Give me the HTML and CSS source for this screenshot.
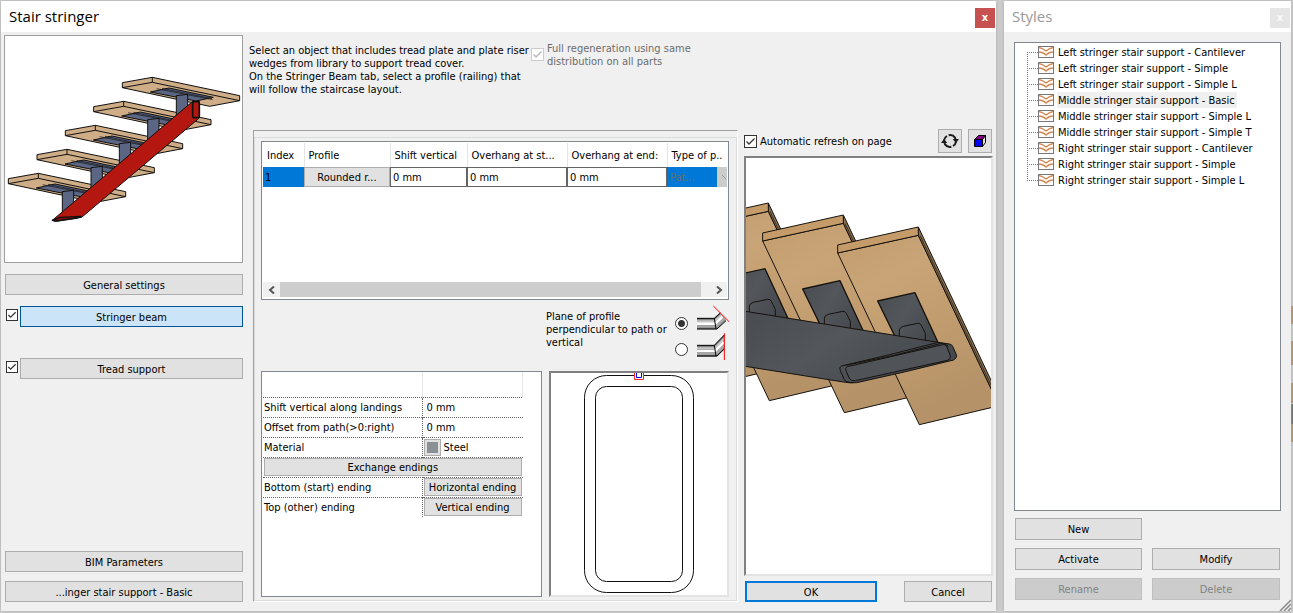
FILE: index.html
```html
<!DOCTYPE html>
<html lang="en">
<head>
<meta charset="utf-8">
<title>Stair stringer</title>
<link rel="stylesheet" href="styles.css">
</head>
<body>
<svg class="defs" aria-hidden="true">
  <defs>
    <g id="step">
      <path d="M367 248L457 232L719 287V302L629 319L367 263Z" fill="#cead87"/>
      <path d="M367 263L457 247L719 302M457 232V247" fill="none"/>
      <path d="M451 276L507 264L640 292L588 303Z" fill="#5b6685"/>
      <path d="M470 266L638 299M486 265L636 296" fill="none" stroke-width="2"/>
      <path d="M529 287L563 283V352H529Z" fill="#5b6685"/>
    </g>
    <linearGradient id="wood" x1="0" y1="0" x2="0.4" y2="1">
      <stop offset="0" stop-color="#c39c6c"/><stop offset="0.3" stop-color="#c8a477"/>
      <stop offset="0.6" stop-color="#c09c6e"/><stop offset="1" stop-color="#b69268"/>
    </linearGradient>
    <linearGradient id="slate" x1="0" y1="0" x2="1" y2="0.5">
      <stop offset="0" stop-color="#484c50"/><stop offset="0.5" stop-color="#53565a"/><stop offset="1" stop-color="#45494d"/>
    </linearGradient>
    <g id="tread">
      <path d="M293 399L535 346L766 833V860L538 914Z" fill="url(#wood)"/>
      <path d="M535 321V346L766 833V808Z" fill="#8d7150"/>
      <path d="M540 346L766 822" fill="none" stroke-width="2"/>
      <path d="M293 375L535 321V346L293 399Z" fill="#c59c69"/>
      <path d="M413 543L525 518L600 680H480Z" fill="url(#slate)" stroke-width="4"/>
      <path d="M478 655V630Q479 622 490 619L533 610Q541 609 544 616L556 640V662" fill="none" stroke-width="3"/>
    </g>
    <g id="style-icon">
      <rect x="0.5" y="0.5" width="15" height="11" fill="#fff" stroke="#777"/>
      <path d="M1 1.5Q4 2 8 5Q12 2 15 1.5M1 6Q5 6 8 9Q11 6 15 6" fill="none" stroke="#d28a52" stroke-width="1.4"/>
    </g>
  </defs>
</svg>

<main class="desk">
  <section class="window" aria-label="Stair stringer">
    <header class="titlebar">
      <h1>Stair stringer</h1>
      <button class="close" aria-label="Close">x</button>
    </header>
    <div class="dialog">
      <nav class="sidebar">
        <svg class="picture" viewBox="15 108 711 678" preserveAspectRatio="xMidYMid slice" role="img" aria-label="Stair with highlighted stringer beam">
          <g stroke="#111" stroke-width="3" stroke-linejoin="round">
            <use href="#step" x="-342" y="288"/>
            <use href="#step" x="-256" y="216"/>
            <use href="#step" x="-171" y="144"/>
            <use href="#step" x="-86" y="72"/>
            <use href="#step"/>
            <path d="M157 661L578 304H598V354L245 652L166 664Z" fill="#b3170f"/>
            <path d="M157 661L180 652L243 649L232 654L170 663Z" fill="#7e120c" stroke-width="4"/>
            <rect x="578" y="305" width="20" height="48" rx="6" fill="#b3170f" stroke-width="5"/>
          </g>
        </svg>
        <button class="btn general">General settings</button>
        <div class="tab stringer">
          <input type="checkbox" class="check small" checked aria-label="Use stringer beam">
          <button class="btn active">Stringer beam</button>
        </div>
        <div class="tab support">
          <input type="checkbox" class="check small" checked aria-label="Use tread support">
          <button class="btn">Tread support</button>
        </div>
        <div class="sidebar-end">
          <button class="btn">BIM Parameters</button>
          <button class="btn">...inger stair support - Basic</button>
        </div>
      </nav>

      <div class="center">
        <div class="notes">
          <p class="note">Select an object that includes tread plate and plate riser<br>wedges from library to support tread cover.<br>On the Stringer Beam tab, select a profile (railing) that<br>will follow the staircase layout.</p>
          <label class="regen"><input type="checkbox" class="check" checked disabled><span>Full regeneration using same<br>distribution on all parts</span></label>
        </div>
        <div class="panel">
          <div class="panel-in">
            <div class="listbox">
              <table class="profiles">
                <colgroup><col class="c-index"><col class="c-profile"><col class="c-shift"><col class="c-over"><col class="c-over"><col></colgroup>
                <thead>
                  <tr><th>Index</th><th>Profile</th><th>Shift vertical</th><th>Overhang at st...</th><th>Overhang at end:</th><th>Type of p..</th></tr>
                </thead>
                <tbody>
                  <tr>
                    <td class="sel">1</td>
                    <td><button class="btn cell">Rounded r...</button></td>
                    <td><input type="text" class="cell" value="0 mm" aria-label="Shift vertical"></td>
                    <td><input type="text" class="cell" value="0 mm" aria-label="Overhang at start"></td>
                    <td><input type="text" class="cell" value="0 mm" aria-label="Overhang at end"></td>
                    <td><select class="type" disabled aria-label="Type of path"><option>Pat...</option></select></td>
                  </tr>
                </tbody>
              </table>
              <div class="scrollbar">
                <button aria-label="Scroll left"><svg width="8" height="8" viewBox="0 0 8 8"><path d="M6 0.5L2 4L6 7.5" /></svg></button>
                <div class="track"><div class="thumb"></div></div>
                <button aria-label="Scroll right"><svg width="8" height="8" viewBox="0 0 8 8"><path d="M2 0.5L6 4L2 7.5"/></svg></button>
              </div>
            </div>

            <div class="plane" role="radiogroup" aria-labelledby="plane-label">
              <p id="plane-label">Plane of profile<br>perpendicular to path or<br>vertical</p>
              <div class="choices">
                <label><input type="radio" name="plane" checked aria-label="Perpendicular to path">
                  <svg width="32" height="26" viewBox="81 30 96 78">
                    <path d="M81 54H132L150 38L168 60L140 88H81Z" fill="#808080"/>
                    <path d="M81 64H134L155 44" stroke="#c8c8c8" stroke-width="6" fill="none"/>
                    <path d="M81 71H136L158 50" stroke="#fff" stroke-width="8" fill="none"/>
                    <path d="M81 79H139L164 56" stroke="#aaa" stroke-width="7" fill="none"/>
                    <path d="M81 55H133L151 39M81 87H141L168 62M133 55L138 87" stroke="#000" stroke-width="3" fill="none"/>
                    <path d="M130 18L177 65" stroke="#f00" stroke-width="3"/>
                  </svg>
                </label>
                <label><input type="radio" name="plane" aria-label="Vertical">
                  <svg width="32" height="26" viewBox="81 108 96 78">
                    <path d="M81 136H132L163 104V146L140 170H81Z" fill="#808080"/>
                    <path d="M81 145H134L162 116" stroke="#c8c8c8" stroke-width="6" fill="none"/>
                    <path d="M81 153H136L162 126" stroke="#fff" stroke-width="8" fill="none"/>
                    <path d="M81 161H139L162 137" stroke="#aaa" stroke-width="7" fill="none"/>
                    <path d="M81 136H133L163 105M81 168H141L163 147M133 136L138 168" stroke="#000" stroke-width="3" fill="none"/>
                    <path d="M163 100V180" stroke="#f00" stroke-width="3"/>
                  </svg>
                </label>
              </div>
            </div>

            <div class="details">
              <div class="listbox">
                <table class="props">
                  <colgroup><col class="c-name"><col class="c-value"></colgroup>
                  <thead><tr><td></td><td></td></tr></thead>
                  <tbody>
                    <tr><th>Shift vertical along landings</th><td><input type="text" class="plain" value="0 mm" aria-label="Shift vertical along landings"></td></tr>
                    <tr><th>Offset from path(&gt;0:right)</th><td><input type="text" class="plain" value="0 mm" aria-label="Offset from path"></td></tr>
                    <tr><th>Material</th><td><div class="material"><button class="swatch" aria-label="Choose material"></button>Steel</div></td></tr>
                    <tr><td colspan="2" class="wide"><button class="btn prop">Exchange endings</button></td></tr>
                    <tr><th>Bottom (start) ending</th><td><button class="btn prop">Horizontal ending</button></td></tr>
                    <tr><th>Top (other) ending</th><td><button class="btn prop">Vertical ending</button></td></tr>
                  </tbody>
                </table>
              </div>
              <div class="sunken">
                <svg class="profile-view" viewBox="0 0 176 222" preserveAspectRatio="xMidYMin meet" role="img" aria-label="Rounded rectangle profile">
                  <rect x="33.500" y="2.500" width="109" height="217" rx="22" fill="none" stroke="#111"/>
                  <rect x="44.500" y="13.500" width="87" height="195" rx="11" fill="none" stroke="#111"/>
                  <path d="M83.500 0V6.500H92.500V0" fill="#fff" stroke="#f22"/>
                  <path d="M85.500 0V4.500H90.500V0" fill="none" stroke="#00f"/>
                </svg>
              </div>
            </div>
          </div>
        </div>
      </div>

      <div class="right">
        <div class="refresh">
          <label><input type="checkbox" class="check" checked>Automatic refresh on page</label>
          <button class="tool" aria-label="Refresh">
            <svg width="18" height="16" viewBox="0 0 54 48">
              <path d="M9 22A18 18 0 0 1 18 9M23 7A18 18 0 0 1 42 14L44 21M45 26A18 18 0 0 1 36 39M31 41A18 18 0 0 1 12 34L10 27" fill="none" stroke="#1a1a1a" stroke-width="6"/>
              <path d="M0 30L9 18L19 30ZM35 18H54L45 30Z" fill="#1a1a1a"/>
            </svg>
          </button>
          <button class="tool" aria-label="Show solid view">
            <svg width="14" height="14" viewBox="0 0 14 14" stroke="#000" stroke-linejoin="round">
              <path d="M1.500 5.500L5.500 1.500H12.500L9.500 5.500Z" fill="#800080"/>
              <path d="M9.500 5.500L12.500 1.500V8.500L9.500 12.500Z" fill="#ddd"/>
              <rect x="1.500" y="5.500" width="8" height="7" fill="#00f"/>
            </svg>
          </button>
        </div>
        <div class="sunken preview">
          <svg viewBox="18 114 735 1150" preserveAspectRatio="xMidYMin meet" role="img" aria-label="3D preview of stair treads and beam">
            <g stroke="#15120e" stroke-width="3" stroke-linejoin="round">
              <use href="#tread" x="-675" y="-108"/>
              <use href="#tread" x="-450" y="-72"/>
              <use href="#tread" x="-225" y="-36"/>
              <use href="#tread"/>
              <path d="M10 573L595 667L628 672Q635 673 638 679L650 706Q651 714 641 720Q490 758 350 788Q330 790 310 786L10 738Z" fill="url(#slate)"/>
              <path d="M595 667Q450 705 305 738Q297 741 300 749L313 779Q318 788 340 788" fill="none"/>
              <path d="M322 740Q314 744 318 752L328 775Q333 784 346 782L622 721Q634 717 631 708L621 681Q617 671 604 675Z" fill="#505357"/>
              <path d="M316 736Q460 710 600 671Q618 668 624 680" fill="none" stroke-width="3"/>
            </g>
          </svg>
        </div>
        <div class="confirm">
          <button class="btn ok">OK</button>
          <button class="btn cancel">Cancel</button>
        </div>
      </div>
    </div>
  </section>

  <aside class="window styles" aria-label="Styles">
    <header class="titlebar">
      <h2>Styles</h2>
      <button class="close" aria-label="Close styles">x</button>
    </header>
    <div class="styles-body">
      <ul class="tree">
        <li><svg width="16" height="12"><use href="#style-icon"/></svg><span>Left stringer stair support - Cantilever</span></li>
        <li><svg width="16" height="12"><use href="#style-icon"/></svg><span>Left stringer stair support - Simple</span></li>
        <li><svg width="16" height="12"><use href="#style-icon"/></svg><span>Left stringer stair support - Simple L</span></li>
        <li class="current"><svg width="16" height="12"><use href="#style-icon"/></svg><span>Middle stringer stair support - Basic</span></li>
        <li><svg width="16" height="12"><use href="#style-icon"/></svg><span>Middle stringer stair support - Simple L</span></li>
        <li><svg width="16" height="12"><use href="#style-icon"/></svg><span>Middle stringer stair support - Simple T</span></li>
        <li><svg width="16" height="12"><use href="#style-icon"/></svg><span>Right stringer stair support - Cantilever</span></li>
        <li><svg width="16" height="12"><use href="#style-icon"/></svg><span>Right stringer stair support - Simple</span></li>
        <li><svg width="16" height="12"><use href="#style-icon"/></svg><span>Right stringer stair support - Simple L</span></li>
      </ul>
      <div class="actions">
        <button class="btn new">New</button>
        <button class="btn">Activate</button>
        <button class="btn">Modify</button>
        <button class="btn" disabled>Rename</button>
        <button class="btn" disabled>Delete</button>
      </div>
    </div>
    <svg class="grip" width="12" height="12" viewBox="0 0 12 12" aria-hidden="true"><path d="M1 12L12 1M5 12L12 5M9 12L12 9" stroke="#888" stroke-width="1.500"/></svg>
  </aside>
</main>
</body>
</html>
```
FILE: styles.css
```css
* { box-sizing: border-box; }

body {
  margin: 0;
  color: #000;
  font: 11px/13px "DejaVu Sans Condensed", "DejaVu Sans", sans-serif;
}

h1, h2, p, ul { margin: 0; padding: 0; }
svg { display: block; }
.defs { position: absolute; width: 0; height: 0; }

button, input, select { font: inherit; color: inherit; margin: 0; }

.desk {
  display: grid;
  grid-template-columns: minmax(0, 1fr) 287px;
  gap: 8px;
  min-height: 100vh;
  padding: 1px 2px 2px 1px;
  background: linear-gradient(#b98d56, #b98d56) right 306px / 2px 18px no-repeat,
    linear-gradient(#b98d56, #b98d56) right 341px / 2px 24px no-repeat,
    linear-gradient(#b98d56, #b98d56) right 383px / 2px 20px no-repeat,
    linear-gradient(#666, #666) right 404px / 2px 20px no-repeat,
    linear-gradient(#b98d56, #b98d56) right 424px / 2px 18px no-repeat,
    #cecece;
}

.window {
  display: flex;
  flex-direction: column;
  background: #f0f0f0;
  box-shadow: 0 0 4px #aaa;
}

.titlebar {
  display: flex;
  justify-content: space-between;
  align-items: flex-start;
  height: 31px;
  padding: 7px 1px 0 8px;
  background: #fff;
}
.titlebar h1, .titlebar h2 { font: 15px/16px "Open Sans", "Noto Sans", sans-serif; }
.titlebar h2 { color: #999; }

.close {
  width: 20px;
  height: 20px;
  padding: 0 0 2px;
  border: 0;
  background: #c75050;
  color: #fff;
  font-weight: bold;
}
.styles .close { background: #e5e5e5; color: #fafafa; }

.dialog {
  flex: 1;
  display: grid;
  grid-template-columns: 239px minmax(0, 1fr) 249px;
  gap: 6px;
  padding: 3px 3px 9px;
}

.btn {
  height: 21px;
  padding: 1px 4px 0;
  border: 1px solid #adadad;
  background: #e1e1e1;
  text-align: center;
  white-space: nowrap;
}
.btn:disabled { background: #ccc; border-color: #bfbfbf; color: #838383; }
.btn.active { background: #cce4f7; border-color: #00549a; }

.check {
  appearance: none;
  flex: none;
  width: 13px;
  height: 13px;
  border: 1px solid #333;
  background: #fff;
}
.check.small { width: 12px; height: 12px; margin-left: 1px; }
.check:checked {
  background: #fff url("data:image/svg+xml,%3Csvg xmlns='http://www.w3.org/2000/svg' viewBox='0 0 11 11'%3E%3Cpath d='M1.500 5.500L4 8L9.500 2.500' fill='none' stroke='%23333' stroke-width='1.300'/%3E%3C/svg%3E") center / 100% no-repeat;
}
.check:disabled { border-color: #ccc; }
.check:disabled:checked {
  background-image: url("data:image/svg+xml,%3Csvg xmlns='http://www.w3.org/2000/svg' viewBox='0 0 11 11'%3E%3Cpath d='M1.500 5.500L4 8L9.500 2.500' fill='none' stroke='%23bbb' stroke-width='1.500'/%3E%3C/svg%3E");
}

/* Sidebar */
.sidebar { display: flex; flex-direction: column; }
.picture { width: 100%; height: 228px; border: 1px solid #a0a0a0; background: #fff; }
.general { margin: 11px 0 0 1px; }
.tab { display: flex; align-items: flex-start; gap: 2px; padding-left: 1px; }
.tab .btn { flex: 1; }
.tab .check { margin-top: 3px; }
.stringer { margin-top: 11px; }
.support { margin-top: 31px; }
.sidebar-end { display: grid; gap: 9px; margin-top: auto; padding-left: 1px; }

/* Centre */
.center { display: flex; flex-direction: column; min-width: 0; }
.notes { display: flex; gap: 8px; height: 95px; padding-top: 7px; white-space: nowrap; }
.note { width: 274px; margin-top: 2px; }
.regen { display: flex; align-items: flex-start; gap: 3px; color: #6d6d6d; }
.regen .check { margin-top: 6px; }

.panel {
  flex: 1;
  display: flex;
  margin-left: 4px;
  padding-top: 6px;
  border: 1px solid;
  border-color: #a0a0a0 #fff #fff #a0a0a0;
}
.panel-in {
  flex: 1;
  min-width: 0;
  display: flex;
  flex-direction: column;
  padding: 3px 7px 3px 6px;
  border: 1px solid #dcdcdc;
}

.listbox { border: 1px solid #828790; background: #fff; }

.panel-in > .listbox { display: flex; flex-direction: column; height: 159px; padding: 1px; }
.profiles { width: 100%; table-layout: fixed; border-collapse: collapse; }
.c-index { width: 41px; }
.c-profile { width: 86px; }
.c-shift { width: 77px; }
.c-over { width: 100px; }
.profiles th {
  height: 24px;
  padding: 0 0 0 4px;
  border-right: 1px solid #e5e5e5;
  font-weight: normal;
  text-align: left;
  white-space: nowrap;
  overflow: hidden;
}
.profiles th:last-child { border-right: 0; }
.profiles td { height: 20px; padding: 0; }
.profiles .sel { padding-left: 2px; background: #0078d7; }
.cell { display: block; width: 100%; height: 20px; }
.btn.cell { padding: 0; }
input.cell { padding: 0 0 0 2px; border: 1px solid #646464; background: #fff; }
.type {
  display: block;
  width: 100%;
  height: 20px;
  padding: 0 0 0 3px;
  border: 0;
  border-radius: 0;
  appearance: none;
  opacity: 1;
  color: #6d6d6d;
  background: url("data:image/svg+xml,%3Csvg xmlns='http://www.w3.org/2000/svg' width='10' height='20'%3E%3Cpath d='M0 0H10V20H0Z' fill='%23ccc'/%3E%3Cpath d='M5 8L9 12' stroke='%23999'/%3E%3C/svg%3E") right / 10px 20px no-repeat #0078d7;
}

.scrollbar { display: flex; height: 15px; margin-top: auto; margin-bottom: 1px; background: #f0f0f0; }
.scrollbar button {
  display: grid;
  place-items: center;
  width: 17px;
  padding: 0;
  border: 0;
  background: none;
}
.scrollbar path { fill: none; stroke: #555; stroke-width: 2; }
.track { flex: 1; }
.thumb { width: 98%; height: 100%; background: #cdcdcd; }

.plane { display: flex; justify-content: flex-end; height: 71px; padding-top: 10px; }
.plane p { width: 129px; white-space: nowrap; }
.choices label { display: flex; align-items: center; gap: 9px; height: 26px; }
.choices svg { overflow: visible; }
.choices input {
  appearance: none;
  width: 13px;
  height: 13px;
  border: 1px solid #333;
  border-radius: 50%;
  background: #fff;
}
.choices input:checked { background: radial-gradient(circle, #333 0 3px, #fff 4px); }

.details { flex: 1; display: grid; grid-template-columns: minmax(0, 1fr) 180px; gap: 7px; }

.props { table-layout: fixed; width: 260px; margin-left: 1px; border-collapse: collapse; }
.c-name { width: 159px; }
.props th, .props td { height: 20px; padding: 0; border-top: 1px dotted #666; }
.props thead td { height: 25px; border-top: 0; border-right: 1px solid #e5e5e5; }
.props th {
  padding: 1px 0 0 1px;
  border-right: 1px dotted #666;
  font-weight: normal;
  text-align: left;
  white-space: nowrap;
}
.props .wide { padding-left: 1px; }
.prop { display: block; width: calc(100% - 2px); height: 18px; margin-left: 1px; padding: 0; }
.wide .prop { width: calc(100% - 1px); margin: 0; }
.plain { display: block; width: 100%; height: 18px; padding: 0 0 0 4px; border: 0; background: none; }
.material { display: flex; align-items: center; gap: 3px; padding-left: 1px; }
.swatch { width: 17px; height: 17px; padding: 0; border: 1px solid #adadad; background: #8b9094; box-shadow: inset 0 0 0 2px #e1e1e1; }

.sunken {
  border: 2px solid;
  border-color: #808080 #e3e3e3 #e3e3e3 #808080;
  background: #fff;
}
.profile-view { width: 100%; height: 100%; }

/* Right column */
.right { display: flex; flex-direction: column; padding-top: 94px; }
.refresh { display: flex; align-items: center; gap: 6px; height: 24px; padding-right: 1px; }
.refresh label { flex: 1; display: flex; align-items: center; gap: 3px; white-space: nowrap; }
.tool {
  display: grid;
  place-items: center;
  width: 24px;
  height: 24px;
  padding: 0;
  border: 1px solid #adadad;
  background: #e1e1e1;
}
.preview { flex: 1; margin-top: 3px; }
.preview svg { width: 100%; }
.confirm { display: flex; justify-content: space-between; margin-top: 5px; padding: 0 1px; }
.ok { width: 132px; border: 2px solid #0078d7; }
.cancel { width: 88px; }

/* Styles window */
.styles { position: relative; }
.styles-body { flex: 1; display: flex; flex-direction: column; padding: 10px 10px 11px; }
.tree {
  flex: 1;
  padding: 1px 12px;
  border: 1px solid #828790;
  background: #fff;
  list-style: none;
}
.tree li {
  display: flex;
  align-items: center;
  height: 16px;
  background: linear-gradient(90deg, #777 1px, transparent 1px) 0 8px / 2px 1px repeat-x,
    linear-gradient(#777 1px, transparent 1px) 0 0 / 1px 2px repeat-y;
}
.tree li:first-child {
  background: linear-gradient(#fff, #fff) 0 0 / 1px 8px no-repeat,
    linear-gradient(90deg, #777 1px, transparent 1px) 0 8px / 2px 1px repeat-x,
    linear-gradient(#777 1px, transparent 1px) 0 0 / 1px 2px repeat-y;
}
.tree li:last-child {
  background: linear-gradient(#fff, #fff) 0 9px / 1px 8px no-repeat,
    linear-gradient(90deg, #777 1px, transparent 1px) 0 8px / 2px 1px repeat-x,
    linear-gradient(#777 1px, transparent 1px) 0 0 / 1px 2px repeat-y;
}
.tree svg { flex: none; margin-left: 11px; }
.tree span { flex: 1; padding: 1px 0 0 4px; background: #fff; line-height: 15px; white-space: nowrap; }
.tree .current::after { content: ""; flex: 1; height: 16px; background: #fff; }
.tree .current span { flex: none; border-left: 3px solid #fff; padding: 1px 2px 0 1px; background: #f0f0f0; }
.actions { display: grid; grid-template-columns: 127px 128px; justify-content: space-between; gap: 8px; margin-top: 7px; padding: 0 1px; }
.actions .btn { height: 22px; padding-top: 0; }
.new + .btn { grid-column: 1; }
.grip { position: absolute; right: 0; bottom: 0; }
```
